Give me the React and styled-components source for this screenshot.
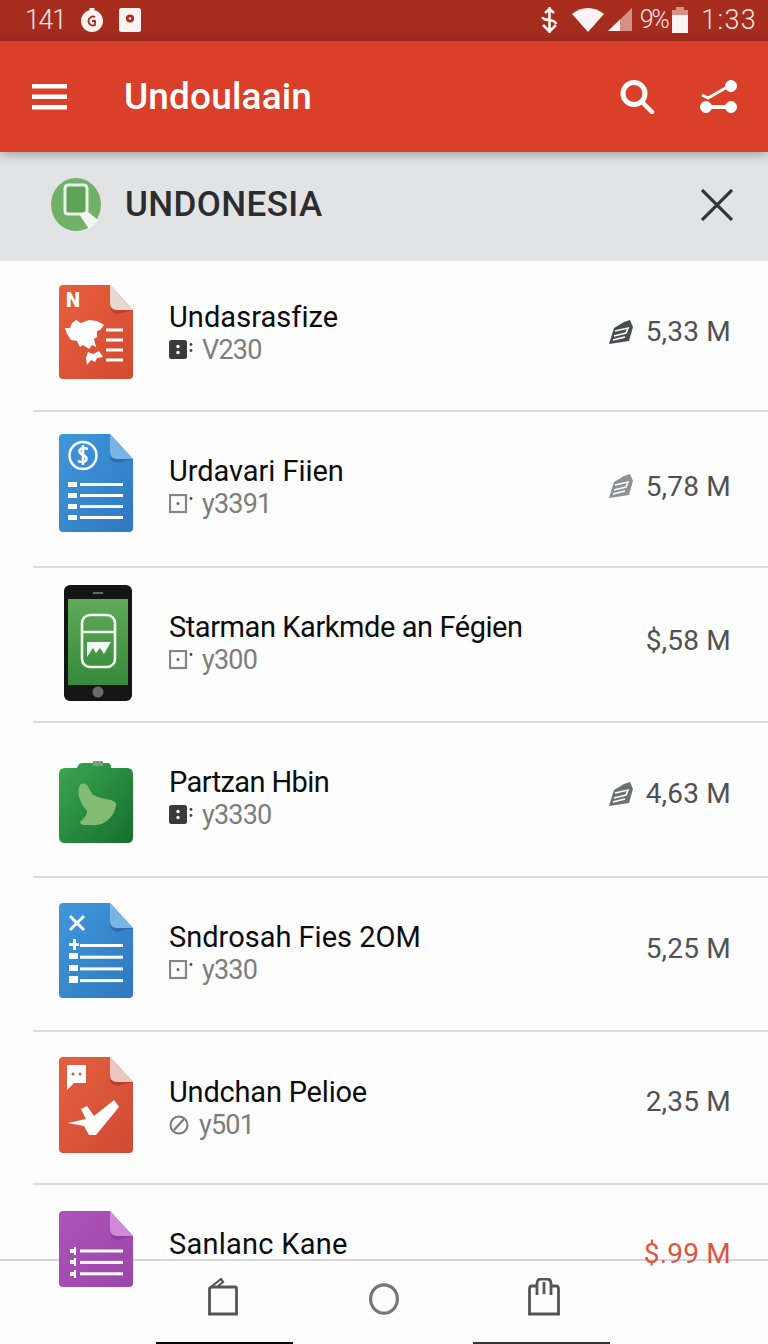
import React from 'react'
import styled, { createGlobalStyle } from 'styled-components'

const GlobalStyle = createGlobalStyle`
  html, body { margin: 0; padding: 0; background: #fff; }
  * { box-sizing: border-box; }
`

const Page = styled.div`
  position: relative;
  width: 768px;
  height: 1344px;
  overflow: hidden;
  display: flex;
  flex-direction: column;
  background: #fdfdfd;
  font-family: Roboto, 'Liberation Sans', sans-serif;
`

const StatusBar = styled.div`
  height: 41px;
  flex: none;
  display: flex;
  align-items: center;
  padding: 0 11px 2px 25px;
  background: linear-gradient(#a82d1f, #a32b1d);
  color: #f3e4e1;
  font-size: 27px;
  font-weight: 300;
`

const StatusLeft = styled.div`
  display: flex;
  align-items: center;
  gap: 15px;
`

const StatusRight = styled.div`
  margin-left: auto;
  display: flex;
  align-items: center;
`

const StatusGlyph = styled.span`
  display: flex;
  margin-left: ${p => p.$left}px;
`

const StatusText = styled.span`
  letter-spacing: ${p => p.$spacing || '-1.5px'};
  margin: ${p => p.$margin || '0'};
  font-size: ${p => p.$size || '27px'};
`

const AppBar = styled.div`
  position: relative;
  z-index: 2;
  height: 111px;
  flex: none;
  display: flex;
  align-items: center;
  padding: 0 31px 0 32px;
  background: #da3f2a;
  box-shadow: 0 3px 10px rgba(0, 0, 0, 0.28);
`

const AppTitle = styled.h1`
  margin: 0 0 0 57px;
  color: #fff;
  font-size: 37px;
  font-weight: 500;
  letter-spacing: 0.15px;
`

const AppActions = styled.div`
  margin-left: auto;
  display: flex;
  align-items: center;
  gap: 45px;
`

const FilterBand = styled.div`
  height: 109px;
  flex: none;
  display: flex;
  align-items: center;
  padding: 0 35px 4px 51px;
  background: #e2e3e5;
`

const FilterLabel = styled.span`
  margin-left: 24px;
  color: #2b2c2e;
  font-size: 35px;
  font-weight: 500;
  letter-spacing: 0.4px;
`

const CloseSlot = styled.div`
  margin-left: auto;
  display: flex;
`

const List = styled.div`
  flex: 1;
  min-height: 0;
  display: flex;
  flex-direction: column;
  padding-left: 33px;
`

const Row = styled.div`
  height: ${p => p.$height}px;
  flex: none;
  display: flex;
  align-items: center;
  padding-right: 37px;
  border-bottom: ${p => (p.$last ? 'none' : '2px solid #dcdcdc')};
`

const IconSlot = styled.div`
  position: relative;
  z-index: 3;
  width: 136px;
  flex: none;
  display: flex;
  padding-left: 26px;
  transform: translateY(${p => p.$shift || 0}px);
`

const RowText = styled.div`
  flex: 1;
  display: flex;
  flex-direction: column;
  transform: translateY(${p => p.$shift || 0}px);
`

const RowTitle = styled.div`
  color: #0c0c0c;
  font-size: 29px;
  line-height: 34px;
  letter-spacing: ${p => p.$spacing}px;
`

const RowSub = styled.div`
  display: flex;
  align-items: center;
  gap: 9px;
  height: 32px;
  color: #7d7d7d;
  font-size: 27px;
  letter-spacing: -0.8px;
`

const Price = styled.div`
  position: relative;
  z-index: 3;
  display: flex;
  align-items: center;
  gap: 13px;
  color: ${p => (p.$alert ? '#e0533f' : '#505154')};
  font-size: 28px;
  letter-spacing: 0.2px;
  transform: translateY(${p => p.$shift || 0}px);
`

const BottomNav = styled.div`
  position: absolute;
  z-index: 2;
  left: 0;
  right: 0;
  bottom: 0;
  height: 85px;
  display: flex;
  flex-direction: column;
  background: #fdfdfd;
  border-top: 2px solid #d6d6d6;
`

const NavIcons = styled.div`
  display: flex;
  justify-content: center;
  align-items: flex-start;
  gap: 130px;
  padding-top: 17px;
`

const HomeBars = styled.div`
  margin-top: auto;
  display: flex;
  gap: 180px;
  padding-left: 156px;
`

const HomeBar = styled.div`
  width: 137px;
  height: 2px;
  background: ${p => p.$tone};
`

const PhoneSvg = styled.svg`
  margin-left: 5px;
`

const RingSvg = styled.svg`
  margin: 5px -1px 0 1px;
`

const Menu = () => (
  <svg width="35" height="26" viewBox="0 0 35 26" fill="#fff">
    <rect y="0" width="35" height="4.5" />
    <rect y="10.5" width="35" height="4.5" />
    <rect y="21" width="35" height="4.5" />
  </svg>
)

const Search = () => (
  <svg width="35" height="34" viewBox="0 0 35 34" fill="none" stroke="#fff" strokeLinecap="round">
    <circle cx="14" cy="13.5" r="11" strokeWidth="5" />
    <path d="M22 22 L32 32" strokeWidth="4.5" />
  </svg>
)

const Share = () => (
  <svg width="37" height="33" viewBox="0 0 37 33" fill="#fff" stroke="#fff">
    <circle cx="31" cy="6" r="5.5" />
    <circle cx="6" cy="27" r="5.5" />
    <circle cx="31" cy="27" r="5.5" />
    <path d="M2 15 L8 18 L29 6" fill="none" strokeWidth="3" />
    <path d="M6 27 H31" fill="none" strokeWidth="4" />
  </svg>
)

const Timer = () => (
  <svg width="24" height="24" viewBox="0 0 24 24">
    <circle cx="12" cy="13" r="11" fill="#fbf4f2" />
    <rect x="9.5" y="0" width="5" height="4" fill="#fbf4f2" />
    <path d="M15 9 A4.5 4.5 0 1 0 15 17 V13 H12" fill="none" stroke="#a62c1e" strokeWidth="1.8" />
  </svg>
)

const Camera = () => (
  <svg width="22" height="24" viewBox="0 0 22 24">
    <rect width="22" height="24" rx="2.5" fill="#fbf4f2" />
    <circle cx="11" cy="10.5" r="4" fill="#a62c1e" />
    <circle cx="11" cy="10.5" r="1.3" fill="#fbf4f2" />
  </svg>
)

const Usb = () => (
  <svg width="17" height="26" viewBox="0 0 17 26" fill="none" stroke="#fbf4f2" strokeWidth="2.6">
    <path d="M8.5 0 V26 M4 6 L8.5 2 L13 6 M1.5 10 C2 15 14 11 15 17 M2 18 L8.5 24.5 L15 18" />
  </svg>
)

const Wifi = () => (
  <svg width="32" height="24" viewBox="0 0 32 24">
    <path d="M0 6 C9 -2 23 -2 32 6 L16 24 Z" fill="#fbf4f2" />
  </svg>
)

const Signal = () => (
  <svg width="24" height="23" viewBox="0 0 24 23">
    <path d="M24 0 V23 H0 Z" fill="#d88f84" />
    <path d="M12 11.5 V23 H0 Z" fill="#fbf4f2" />
  </svg>
)

const Battery = () => (
  <svg width="16" height="26" viewBox="0 0 16 26">
    <rect x="4" y="0" width="8" height="4" fill="#d88f84" />
    <rect x="0" y="3" width="16" height="5" fill="#d88f84" />
    <rect x="0" y="8" width="16" height="18" fill="#fbf4f2" />
  </svg>
)

const FilterBadge = () => (
  <svg width="50" height="53" viewBox="0 0 50 53">
    <ellipse cx="25" cy="26.5" rx="25" ry="26.5" fill="#71b068" />
    <path d="M17 7 H33 Q36 7 36 11 V33 Q36 36 33 36 H17 Q14 36 14 33 V11 Q14 7 17 7 Z" fill="#5ea358" stroke="#e8f2e5" strokeWidth="3" />
    <path d="M28 36 L38 51 Q44 47 47 42 L36 33 Z" fill="#f4f6f2" />
  </svg>
)

const Close = () => (
  <svg width="32" height="32" viewBox="0 0 32 32" stroke="#333538" strokeWidth="3.2">
    <path d="M1 1 L31 31 M31 1 L1 31" />
  </svg>
)

const DocShape = ({ id, from, to, fold, crease, children, height = 94 }) => (
  <svg width="74" height={height} viewBox={`0 0 74 ${height}`}>
    <defs>
      <linearGradient id={id} x1="0" y1="0" x2="1" y2="1">
        <stop offset="0" stopColor={from} />
        <stop offset="1" stopColor={to} />
      </linearGradient>
    </defs>
    <path d={`M4 0 H51 L74 25 V${height - 4} Q74 ${height} 70 ${height} H4 Q0 ${height} 0 ${height - 4} V4 Q0 0 4 0 Z`} fill={`url(#${id})`} />
    <path d="M51 20 Q51 28 58 29 L74 25 Z" fill={crease} />
    <path d="M51 0 L74 25 H58 Q51 25 51 18 Z" fill={fold} />
    {children}
  </svg>
)

const Lines = ({ y, step, count, x = 21 }) => (
  <g fill="#fff">
    {Array.from({ length: count }).map((_, i) => (
      <rect key={i} x={x} y={y + i * step} width={64 - x} height="3" />
    ))}
  </g>
)

const MapDoc = () => (
  <DocShape id="red1" from="#e75f3c" to="#d34a30" fold="#e6d8d2" crease="#c0412a">
    <text x="7" y="22" fill="#fff" fontFamily="Roboto, sans-serif" fontSize="20" fontWeight="900">N</text>
    <path d="M13 38 L17 35 L22 38 L30 35 L38 36 L45 40 L41 45 L38 46 L38 52 L35 54 L37 62 L33 60 L30 64 L24 60 L21 62 L18 56 L12 55 L8 49 L6 43 L11 43 Z" fill="#fff" />
    <path d="M29 67 L34 69 L40 66 L44 72 L38 73 L36 77 L32 75 L28 80 L27 73 Z" fill="#fff" />
    <Lines y={43.5} step={10} count={4} x={47} />
  </DocShape>
)

const CoinDoc = () => (
  <DocShape id="blue1" from="#3f98dc" to="#2f78c0" fold="#78b4e6" crease="#2a6cae" height={98}>
    <circle cx="24" cy="21.5" r="13.5" fill="none" stroke="#fff" strokeWidth="2.5" />
    <path d="M29 15 C21 12 17 18 24 21 C31 24 27 30 19 27 M24 11 V31" fill="none" stroke="#fff" strokeWidth="2.5" />
    <g fill="#fff">
      <rect x="9" y="48" width="9" height="5" />
      <rect x="9" y="59" width="9" height="5" />
      <rect x="9" y="70" width="9" height="5" />
      <rect x="9" y="81" width="9" height="5" />
    </g>
    <Lines y={49} step={11} count={4} />
  </DocShape>
)

const Phone = () => (
  <PhoneSvg width="68" height="116" viewBox="0 0 68 116">
    <defs>
      <linearGradient id="screen" x1="0" y1="0" x2="0" y2="1">
        <stop offset="0" stopColor="#5faa58" />
        <stop offset="1" stopColor="#37893c" />
      </linearGradient>
    </defs>
    <rect width="68" height="116" rx="6" fill="#151515" />
    <rect x="4" y="14" width="60" height="86" fill="url(#screen)" />
    <rect x="29" y="7" width="10" height="2" fill="#666" />
    <circle cx="34" cy="107" r="5.5" fill="#6b6b6b" />
    <rect x="18" y="30" width="33" height="52" rx="8" fill="none" stroke="#f2f7ef" strokeWidth="2.6" />
    <path d="M18 47 H51" stroke="#f2f7ef" strokeWidth="2.6" />
    <path d="M23 57 H47 L40 69 L36 63 L32 68 L29 63 L23 72 Z" fill="#f2f7ef" />
  </PhoneSvg>
)

const LeafApp = () => (
  <svg width="74" height="82" viewBox="0 0 74 82">
    <defs>
      <linearGradient id="leaf" x1="0" y1="0" x2="1" y2="1">
        <stop offset="0" stopColor="#3ea650" />
        <stop offset="1" stopColor="#136f2d" />
      </linearGradient>
    </defs>
    <path d="M6 7 H18 Q19 2 24 2 H49 Q52 2 52 7 H68 Q74 7 74 13 V76 Q74 82 68 82 H6 Q0 82 0 76 V13 Q0 7 6 7 Z" fill="url(#leaf)" />
    <rect x="34" y="0" width="10" height="5" fill="#74a577" />
    <path d="M21 24 C27 19 30 27 33 33 C42 39 52 37 57 42 C57 55 45 66 32 64 C26 64 22 65 21 61 C26 56 28 54 28 50 C21 42 17 32 21 24 Z" fill="#84bb74" />
  </svg>
)

const FormDoc = () => (
  <DocShape id="blue2" from="#3f98dc" to="#2f78c0" fold="#78b4e6" crease="#2a6cae" height={95}>
    <path d="M11 13 L25 27 M25 13 L11 27" stroke="#fff" strokeWidth="3" />
    <g fill="#fff">
      <path d="M10 40 H14 V36 H17 V40 H20 V43 H17 V47 H14 V43 H10 Z" />
      <rect x="10" y="50" width="9" height="6" />
      <rect x="10" y="62" width="9" height="6" />
      <rect x="10" y="73" width="9" height="7" />
    </g>
    <Lines y={41} step={11.7} count={4} />
  </DocShape>
)

const CheckDoc = () => (
  <DocShape id="red2" from="#e4603f" to="#d04a34" fold="#e9c6c0" crease="#bd3e2a" height={96}>
    <path d="M8 8 H27 V26 H15 L8 33 Z" fill="#fff" />
    <circle cx="14" cy="17" r="1.5" fill="#d9573a" />
    <circle cx="21" cy="17" r="1.5" fill="#d9573a" />
    <path d="M9 66 L27 62 L22 52 L28 49 L35 59 L55 43 L60 50 L37 78 L30 78 L25 69 Z" fill="#fff" />
  </DocShape>
)

const PurpleDoc = () => (
  <DocShape id="purple" from="#ac55b8" to="#9c45aa" fold="#cf8bd8" crease="#8d3c9d" height={76}>
    <path d="M11 38 H15 V36 H17 V44 H15 V42 H11 Z M11 49 H15 V47 H17 V55 H15 V53 H11 Z M11 61 H15 V59 H17 V67 H15 V65 H11 Z" fill="#fff" />
    <Lines y={38.5} step={11.4} count={3} />
  </DocShape>
)

const BoxMark = ({ solid }) => (
  <svg width="24" height="20" viewBox="0 0 24 20">
    {solid ? (
      <>
        <rect width="18" height="19" rx="2.5" fill="#3a3a3a" />
        <circle cx="9" cy="6.5" r="1.7" fill="#fff" />
        <circle cx="9" cy="12.5" r="1.7" fill="#fff" />
      </>
    ) : (
      <>
        <rect x="1" y="1" width="16" height="17" fill="none" stroke="#858585" strokeWidth="2.2" />
        <circle cx="9" cy="9.5" r="1.5" fill="#666" />
      </>
    )}
    <circle cx="22" cy="4.5" r="1.4" fill="#444" />
    {solid && <circle cx="22" cy="10.5" r="1.4" fill="#444" />}
  </svg>
)

const NoMark = () => (
  <svg width="21" height="20" viewBox="0 0 21 20" fill="none" stroke="#777" strokeWidth="2">
    <circle cx="10" cy="10" r="8.5" />
    <path d="M5 15 L15 4" />
  </svg>
)

const Tag = ({ tone }) => (
  <svg width="24" height="24" viewBox="0 0 24 24">
    <path d="M0 24 L5 8 L15 2 L21 0 L24 7 L20 21 Z" fill={tone} />
    <path d="M6 11 L19 8 L17 13 L5 16 M4 20 L16 17" fill="none" stroke="#fff" strokeWidth="1.6" />
  </svg>
)

const Pages = () => (
  <svg width="30" height="38" viewBox="0 0 30 38" fill="none" stroke="#555" strokeWidth="2.8">
    <path d="M4 9 H27 Q28.5 9 28.5 11 V36 H1.5 V11 Q1.5 9 4 9 Z" />
    <path d="M3 9 L13 1 L15 4 L10 8" strokeWidth="2.2" />
  </svg>
)

const Ring = () => (
  <RingSvg width="30" height="32" viewBox="0 0 30 32" fill="none" stroke="#777" strokeWidth="3.2">
    <ellipse cx="15" cy="16" rx="13.4" ry="14.2" />
  </RingSvg>
)

const Bag = () => (
  <svg width="32" height="38" viewBox="0 0 32 38" fill="none" stroke="#555" strokeWidth="2.8">
    <path d="M4 8 H9 M23 8 H28 Q30.5 8 30.5 11 V36 H1.5 V11 Q1.5 8 4 8" />
    <path d="M9 17 V6 Q9 1 13 1 H19 Q23 1 23 6 V17 M16 4 V16" />
  </svg>
)

const items = [
  { height: 151, Art: MapDoc, iconShift: -4, textShift: -3, title: 'Undasrasfize', spacing: 0.05, mark: 'solid', sub: 'V230', price: '5,33 M', tag: '#4b4c4e', priceShift: -4 },
  { height: 156, Art: CoinDoc, iconShift: -6, textShift: -2, title: 'Urdavari Fiien', spacing: -0.05, mark: 'box', sub: 'y3391', price: '5,78 M', tag: '#8f9092', priceShift: -3 },
  { height: 155, Art: Phone, iconShift: -2, textShift: -2, title: 'Starman Karkmde an Fégien', spacing: -0.43, mark: 'box', sub: 'y300', price: '$,58 M', priceShift: -4 },
  { height: 155, Art: LeafApp, iconShift: 2, textShift: -2, title: 'Partzan Hbin', spacing: -0.6, mark: 'solid', sub: 'y3330', price: '4,63 M', tag: '#6e6f71', priceShift: -6 },
  { height: 154, Art: FormDoc, iconShift: -4, textShift: -1, title: 'Sndrosah Fies 2OM', spacing: 0, mark: 'box', sub: 'y330', price: '5,25 M', priceShift: -6 },
  { height: 153, Art: CheckDoc, iconShift: -3, textShift: 0, title: 'Undchan Pelioe', spacing: -0.2, mark: 'no', sub: 'y501', price: '2,35 M', priceShift: -6 },
  { height: 155, Art: PurpleDoc, iconShift: -14, textShift: -3, title: 'Sanlanc Kane', spacing: 0.25, mark: 'box', sub: 'y330', price: '$.99 M', alert: true, priceShift: -9, last: true },
]

const App = () => (
  <Page>
    <GlobalStyle />
    <StatusBar>
      <StatusLeft>
        <StatusText>141</StatusText>
        <Timer />
        <Camera />
      </StatusLeft>
      <StatusRight>
        <Usb />
        <StatusGlyph $left={14}><Wifi /></StatusGlyph>
        <StatusGlyph $left={4}><Signal /></StatusGlyph>
        <StatusText $margin="0 5px 0 8px" $spacing="-2.5px" $size="25px">9%</StatusText>
        <Battery />
        <StatusText $margin="0 0 0 13px" $spacing="1.3px">1:33</StatusText>
      </StatusRight>
    </StatusBar>

    <AppBar>
      <Menu />
      <AppTitle>Undoulaain</AppTitle>
      <AppActions>
        <Search />
        <Share />
      </AppActions>
    </AppBar>

    <FilterBand>
      <FilterBadge />
      <FilterLabel>UNDONESIA</FilterLabel>
      <CloseSlot>
        <Close />
      </CloseSlot>
    </FilterBand>

    <List>
      {items.map(item => (
        <Row key={item.title} $height={item.height} $last={item.last}>
          <IconSlot $shift={item.iconShift}>
            <item.Art />
          </IconSlot>
          <RowText $shift={item.textShift}>
            <RowTitle $spacing={item.spacing}>{item.title}</RowTitle>
            <RowSub>
              {item.mark === 'no' ? <NoMark /> : <BoxMark solid={item.mark === 'solid'} />}
              {item.sub}
            </RowSub>
          </RowText>
          <Price $alert={item.alert} $shift={item.priceShift}>
            {item.tag && <Tag tone={item.tag} />}
            {item.price}
          </Price>
        </Row>
      ))}
    </List>

    <BottomNav>
      <NavIcons>
        <Pages />
        <Ring />
        <Bag />
      </NavIcons>
      <HomeBars>
        <HomeBar $tone="#0a0a0a" />
        <HomeBar $tone="#333" />
      </HomeBars>
    </BottomNav>
  </Page>
)

export default App
